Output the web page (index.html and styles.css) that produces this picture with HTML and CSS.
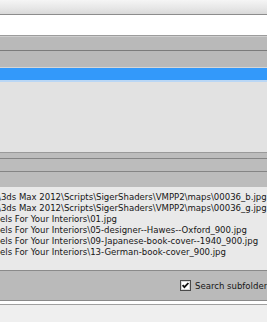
FILE: index.html
```html
<!DOCTYPE html>
<html>
<head>
<meta charset="utf-8">
<link rel="stylesheet" href="styles.css">
</head>
<body>
<div class="win">
  <div class="toolbar"></div>
  <div class="field"></div>
  <div class="band band-a"></div>
  <div class="band band-b"></div>
  <div class="sel"></div>
  <div class="pane"></div>
  <div class="hdr hdr-a"></div>
  <div class="hdr hdr-b"></div>
  <div class="hdr hdr-c"></div>
  <div class="list">
    <div class="row row-max">\3ds Max 2012\Scripts\SigerShaders\VMPP2\maps\00036_b.jpg</div>
    <div class="row row-max">\3ds Max 2012\Scripts\SigerShaders\VMPP2\maps\00036_g.jpg</div>
    <div class="row">els For Your Interiors\01.jpg</div>
    <div class="row">els For Your Interiors\05-designer--Hawes--Oxford_900.jpg</div>
    <div class="row">els For Your Interiors\09-Japanese-book-cover--1940_900.jpg</div>
    <div class="row">els For Your Interiors\13-German-book-cover_900.jpg</div>
  </div>
  <div class="footer">
    <label class="check">
      <svg class="box" width="11" height="11" viewBox="0 0 11 11">
        <rect x="0.5" y="0.5" width="10" height="10" fill="#fff" stroke="#4a4a4a"/>
        <rect x="1.5" y="1.5" width="8" height="8" fill="none" stroke="#d8d8d8"/>
        <path d="M2.6 5.2 L4.4 7.2 L8.4 3" fill="none" stroke="#111" stroke-width="1.8"/>
      </svg>
      <span>Search subfolders</span>
    </label>
  </div>
  <div class="sep"></div>
  <div class="bottom"></div>
</div>
</body>
</html>
```

FILE: styles.css
```css
html, body {
  margin: 0;
  padding: 0;
}
body {
  width: 267px;
  height: 322px;
  overflow: hidden;
  font-family: "DejaVu Sans Condensed", "Liberation Sans", Arial, sans-serif;
  font-stretch: condensed;
  font-size: 9.5px;
  color: #161616;
}
.win {
  display: flex;
  flex-direction: column;
  width: 267px;
  height: 322px;
  overflow: hidden;
}
.win > div {
  flex: none;
}
.toolbar {
  height: 14px;
  background: linear-gradient(#f5f5f5, #e6e6e6 60%, #d9d9d9);
  border-bottom: 1px solid #8c8c8c;
}
.field {
  height: 20px;
  background: #ffffff;
  border-bottom: 1px solid #9c9c9c;
}
.band {
  background: #b9b9b9;
}
.band-a {
  height: 13px;
  border-top: 1px solid #cecece;
  border-bottom: 1px solid #7b7b7b;
}
.band-b {
  height: 16px;
  border-bottom: 1px solid #d6d6d6;
}
.sel {
  height: 12px;
  background: #3399fa;
  border-bottom: 2px solid #bad7f5;
}
.pane {
  height: 70px;
  background: #e2e2e2;
}
.hdr {
  background: #bcbcbc;
}
.hdr-a {
  height: 5px;
  border-top: 1px solid #9a9a9a;
}
.hdr-b {
  height: 12px;
  border-top: 1px solid #858585;
}
.hdr-c {
  height: 15px;
  border-top: 1px solid #858585;
}
.list {
  height: 79px;
  padding-top: 4px;
  background: #e9e9e9;
  overflow: hidden;
}
.row {
  height: 11px;
  line-height: 11px;
  white-space: nowrap;
}
.row-max {
  margin-left: -2px;
}
.footer {
  height: 29px;
  background: #bababa;
  border-top: 1px solid #8a8a8a;
  border-bottom: 1px solid #8a8a8a;
  display: flex;
  align-items: center;
  padding-left: 180px;
  overflow: hidden;
}
.check {
  display: flex;
  align-items: center;
  gap: 4px;
  white-space: nowrap;
}
.box {
  display: block;
  flex: none;
}
.sep {
  height: 3px;
  background: #ffffff;
  border-bottom: 1px solid #a0a0a0;
}
.bottom {
  height: 17px;
  background: #efefef;
}
```
